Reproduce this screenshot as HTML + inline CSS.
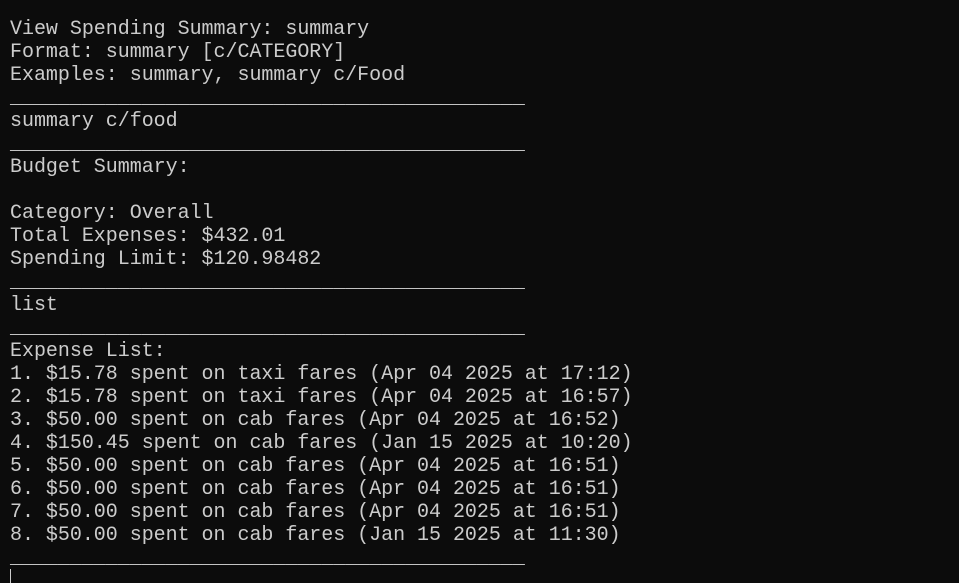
<!DOCTYPE html>
<html><head><style>
html,body{margin:0;padding:0;background:#0c0c0c;width:959px;height:583px;overflow:hidden}
pre{margin:0;position:absolute;left:10px;top:18px;font-family:"Liberation Mono",monospace;font-size:20px;line-height:23px;color:#cccccc;letter-spacing:-0.03px}
.cur{position:absolute;left:10px;top:569px;width:1px;height:14px;background:#cccccc}
</style></head><body>
<pre>View Spending Summary: summary
Format: summary [c/CATEGORY]
Examples: summary, summary c/Food
___________________________________________
summary c/food
___________________________________________
Budget Summary:

Category: Overall
Total Expenses: $432.01
Spending Limit: $120.98482
___________________________________________
list
___________________________________________
Expense List:
1. $15.78 spent on taxi fares (Apr 04 2025 at 17:12)
2. $15.78 spent on taxi fares (Apr 04 2025 at 16:57)
3. $50.00 spent on cab fares (Apr 04 2025 at 16:52)
4. $150.45 spent on cab fares (Jan 15 2025 at 10:20)
5. $50.00 spent on cab fares (Apr 04 2025 at 16:51)
6. $50.00 spent on cab fares (Apr 04 2025 at 16:51)
7. $50.00 spent on cab fares (Apr 04 2025 at 16:51)
8. $50.00 spent on cab fares (Jan 15 2025 at 11:30)
___________________________________________</pre>
<div class="cur"></div>
</body></html>
